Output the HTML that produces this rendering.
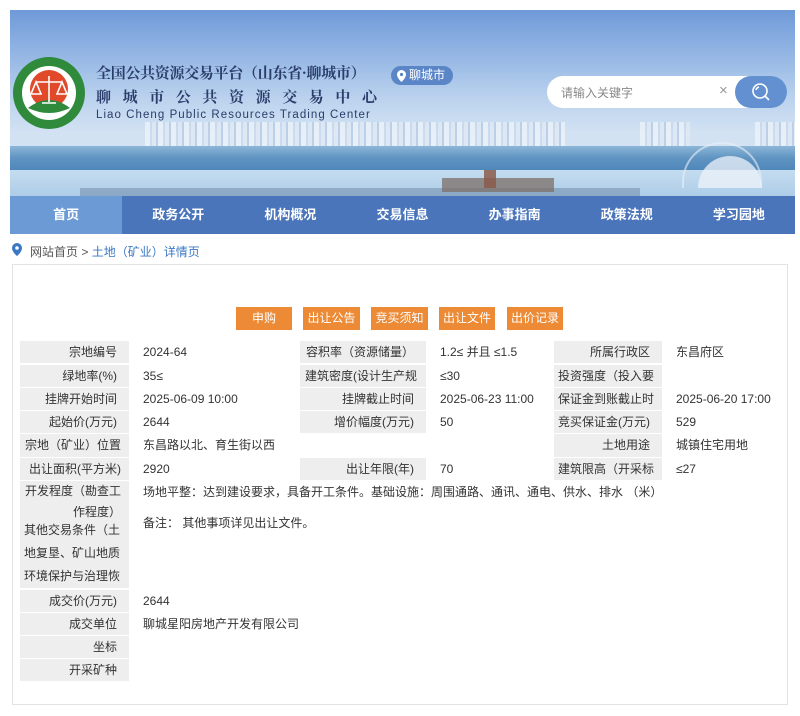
<!DOCTYPE html>
<html><head><meta charset="utf-8">
<style>
*{margin:0;padding:0;box-sizing:border-box}
body{width:800px;height:716px;background:#fff;font-family:"Liberation Sans","Noto Sans CJK SC",sans-serif;position:relative;overflow:hidden;color:#333}
.hdr{position:absolute;left:10px;top:10px;width:785px;height:224px;overflow:hidden;
background:linear-gradient(180deg,#6f9ad8 0%,#94b6e4 20%,#bcd3ee 40%,#d3e2f3 55%,#d6e4f3 100%)}
.bld{position:absolute;top:112px;height:30px;opacity:.75;
background:repeating-linear-gradient(90deg,#eef3fa 0 5px,#c9d9ed 5px 7px,#e2eaf5 7px 11px,#b5cbe5 11px 13px)}
.trees{position:absolute;left:0;top:136px;width:785px;height:24px;background:linear-gradient(180deg,#8db6d8,#5f94c2 50%,#4f88ba)}
.water{position:absolute;left:0;top:160px;width:785px;height:26px;background:linear-gradient(180deg,#c4dcef,#aecde8)}
.shore{position:absolute;left:70px;top:178px;width:560px;height:8px;background:#6f8aa8;opacity:.55}
.nav{position:absolute;left:0;top:186px;width:785px;height:38px;background:#4a75bb;display:flex}
.nav div{flex:1;color:#fff;font-size:13px;font-weight:bold;text-align:center;line-height:38px}
.nav div.on{background:#6c9ad4}
.t1{position:absolute;left:96px;top:62px;font-family:"Noto Serif CJK SC",serif;font-weight:bold;font-size:15px;color:#2a3e6b;letter-spacing:-.3px}
.t2{position:absolute;left:96px;top:86px;font-family:"Noto Serif CJK SC",serif;font-weight:bold;font-size:15px;color:#2a3e6b;letter-spacing:11.6px}
.t3{position:absolute;left:96px;top:109px;font-size:11.5px;color:#2a3e6b;letter-spacing:1.05px}
.loc{position:absolute;left:391px;top:66px;width:62px;height:19px;border-radius:10px;background:#5a86c8;color:#fff;font-size:12px;line-height:19px;padding-left:18px}
.search{position:absolute;left:547px;top:76px;width:240px;height:32px;border-radius:16px;background:#fff}
.search span{position:absolute;left:14px;top:8px;font-size:12px;color:#888}
.search i{position:absolute;left:172px;top:6px;font-style:normal;color:#999;font-size:15px}
.sbtn{position:absolute;left:735px;top:76px;width:52px;height:32px;border-radius:16px;background:#6390d0}
.bc{position:absolute;left:30px;top:243px;font-size:12px;color:#555}
.bc b{font-weight:normal;color:#3a78c4}
.box{position:absolute;left:12px;top:264px;width:776px;height:441px;border:1px solid #e3e3e3}
.btn{position:absolute;top:307px;height:23px;background:#ec8a35;color:#fff;font-size:12px;line-height:23px;text-align:center}
.c{position:absolute;font-size:12px;line-height:22px;white-space:nowrap;overflow:hidden}
.l{background:#eeeeee;text-align:right;padding-right:12px}
.v{background:#fff;padding-left:13px}
</style></head><body>
<div class="hdr">
 <div class="bld" style="left:135px;width:420px"></div>
 <div class="bld" style="left:630px;width:50px"></div>
 <div class="bld" style="left:745px;width:40px"></div>
 <div class="trees"></div><div class="water"></div><div class="shore"></div>
 <div style="position:absolute;left:432px;top:168px;width:112px;height:14px;background:#7d6f68;opacity:.75"></div>
 <div style="position:absolute;left:474px;top:160px;width:12px;height:18px;background:#8a5a4a;opacity:.85"></div>
 <div style="position:absolute;left:688px;top:146px;width:64px;height:32px;border-radius:32px 32px 0 0;background:#eef3fa;opacity:.75"></div>
 <div style="position:absolute;left:672px;top:132px;width:80px;height:46px;border-radius:40px 40px 0 0;border:2px solid #e9f0f8;border-bottom:none;opacity:.6"></div>
 <div class="nav"><div class="on">首页</div><div>政务公开</div><div>机构概况</div><div>交易信息</div><div>办事指南</div><div>政策法规</div><div>学习园地</div></div>
</div>
<svg style="position:absolute;left:12px;top:56px" width="74" height="74" viewBox="0 0 74 74">
<circle cx="37" cy="37" r="36" fill="#2f8a3c"/><circle cx="37" cy="37" r="27" fill="#fff"/>
<circle cx="37" cy="33" r="19" fill="#e04a2a"/>
<path d="M16 52 Q37 36 58 52 Q37 62 16 52Z" fill="#2f8a3c"/>
<path d="M37 20 V46 M24 26 H50 M24 26 L19 38 H29 Z M50 26 L45 38 H55 Z M30 47 H44" stroke="#fff" stroke-width="1.6" fill="none"/>
</svg>
<div class="t1">全国公共资源交易平台（山东省·聊城市）</div>
<div class="t2">聊城市公共资源交易中心</div>
<div class="t3">Liao Cheng Public Resources Trading Center</div>
<div class="loc"><svg style="position:absolute;left:6px;top:4px" width="9" height="12" viewBox="0 0 9 12"><path d="M4.5 0A4.5 4.5 0 0 0 0 4.5C0 8 4.5 12 4.5 12S9 8 9 4.5A4.5 4.5 0 0 0 4.5 0Z" fill="#fff"/><circle cx="4.5" cy="4.5" r="1.6" fill="#5a86c8"/></svg>聊城市</div>
<div class="search"><span>请输入关键字</span><i>×</i></div>
<div class="sbtn"><svg style="position:absolute;left:16px;top:6px" width="20" height="20" viewBox="0 0 20 20"><circle cx="9" cy="9" r="7" stroke="#fff" stroke-width="1.6" fill="none"/><path d="M14 14 L18 18 M5 8 A4 4 0 0 1 8 5" stroke="#fff" stroke-width="1.6" fill="none"/></svg></div>
<svg style="position:absolute;left:12px;top:243px" width="10" height="13" viewBox="0 0 10 13"><path d="M5 0A5 5 0 0 0 0 5C0 9 5 13 5 13S10 9 10 5A5 5 0 0 0 5 0Z" fill="#3a78c4"/><circle cx="5" cy="5" r="1.8" fill="#fff"/></svg>
<div class="bc">网站首页 &gt; <b>土地（矿业）详情页</b></div>
<div class="box"></div>
<div class="btn" style="left:236px;width:56px">申购</div>
<div class="btn" style="left:303px;width:57px">出让公告</div>
<div class="btn" style="left:371px;width:57px">竞买须知</div>
<div class="btn" style="left:439px;width:56px">出让文件</div>
<div class="btn" style="left:507px;width:56px">出价记录</div>

<div class="c l" style="left:20px;top:341px;width:109px;height:22px">宗地编号</div>
<div class="c v" style="left:130px;top:341px;width:169px;height:22px">2024-64</div>
<div class="c l" style="left:300px;top:341px;width:126px;height:22px">容积率（资源储量）</div>
<div class="c v" style="left:427px;top:341px;width:126px;height:22px">1.2≤ 并且 ≤1.5</div>
<div class="c l" style="left:554px;top:341px;width:108px;height:22px">所属行政区</div>
<div class="c v" style="left:663px;top:341px;width:115px;height:22px">东昌府区</div>

<div class="c l" style="left:20px;top:365px;width:109px;height:22px">绿地率(%)</div>
<div class="c v" style="left:130px;top:365px;width:169px;height:22px">35≤</div>
<div class="c l" style="left:300px;top:365px;width:126px;height:22px;text-align:left;padding-left:5px">建筑密度(设计生产规</div>
<div class="c v" style="left:427px;top:365px;width:126px;height:22px">≤30</div>
<div class="c l" style="left:554px;top:365px;width:108px;height:22px;text-align:left;padding-left:4px">投资强度（投入要</div>
<div class="c v" style="left:663px;top:365px;width:115px;height:22px"></div>

<div class="c l" style="left:20px;top:388px;width:109px;height:22px">挂牌开始时间</div>
<div class="c v" style="left:130px;top:388px;width:169px;height:22px">2025-06-09 10:00</div>
<div class="c l" style="left:300px;top:388px;width:126px;height:22px">挂牌截止时间</div>
<div class="c v" style="left:427px;top:388px;width:126px;height:22px">2025-06-23 11:00</div>
<div class="c l" style="left:554px;top:388px;width:108px;height:22px;text-align:left;padding-left:4px">保证金到账截止时</div>
<div class="c v" style="left:663px;top:388px;width:115px;height:22px">2025-06-20 17:00</div>

<div class="c l" style="left:20px;top:411px;width:109px;height:22px">起始价(万元)</div>
<div class="c v" style="left:130px;top:411px;width:169px;height:22px">2644</div>
<div class="c l" style="left:300px;top:411px;width:126px;height:22px">增价幅度(万元)</div>
<div class="c v" style="left:427px;top:411px;width:126px;height:22px">50</div>
<div class="c l" style="left:554px;top:411px;width:108px;height:22px">竞买保证金(万元)</div>
<div class="c v" style="left:663px;top:411px;width:115px;height:22px">529</div>

<div class="c l" style="left:20px;top:434px;width:109px;height:23px;padding-right:8px">宗地（矿业）位置</div>
<div class="c v" style="left:130px;top:434px;width:296px;height:23px">东昌路以北、育生街以西</div>
<div class="c l" style="left:554px;top:434px;width:108px;height:23px">土地用途</div>
<div class="c v" style="left:663px;top:434px;width:115px;height:23px">城镇住宅用地</div>

<div class="c l" style="left:20px;top:458px;width:109px;height:22px;padding-right:8px">出让面积(平方米)</div>
<div class="c v" style="left:130px;top:458px;width:169px;height:22px">2920</div>
<div class="c l" style="left:300px;top:458px;width:126px;height:22px">出让年限(年)</div>
<div class="c v" style="left:427px;top:458px;width:126px;height:22px">70</div>
<div class="c l" style="left:554px;top:458px;width:108px;height:22px;text-align:left;padding-left:4px">建筑限高（开采标</div>
<div class="c v" style="left:663px;top:458px;width:115px;height:22px">≤27</div>

<div class="c l" style="left:20px;top:481px;width:109px;height:41px;white-space:normal;text-align:right;line-height:21px;padding:0 8px 0 4px">开发程度（勘查工作程度）</div>
<div class="c v" style="left:130px;top:481px;width:648px;height:22px">场地平整：达到建设要求，具备开工条件。基础设施：周围通路、通讯、通电、供水、排水 （米）</div>
<div class="c l" style="left:20px;top:519px;width:109px;height:69px;white-space:normal;text-align:left;line-height:23px;padding:0 8px 0 4px">其他交易条件（土地复垦、矿山地质环境保护与治理恢复要求）</div>
<div class="c v" style="left:130px;top:504px;width:648px;height:68px;padding-top:8px">备注： 其他事项详见出让文件。</div>

<div class="c l" style="left:20px;top:590px;width:109px;height:22px">成交价(万元)</div>
<div class="c v" style="left:130px;top:590px;width:648px;height:22px">2644</div>
<div class="c l" style="left:20px;top:613px;width:109px;height:22px">成交单位</div>
<div class="c v" style="left:130px;top:613px;width:648px;height:22px">聊城星阳房地产开发有限公司</div>
<div class="c l" style="left:20px;top:636px;width:109px;height:22px">坐标</div>
<div class="c l" style="left:20px;top:659px;width:109px;height:22px">开采矿种</div>
</body></html>
